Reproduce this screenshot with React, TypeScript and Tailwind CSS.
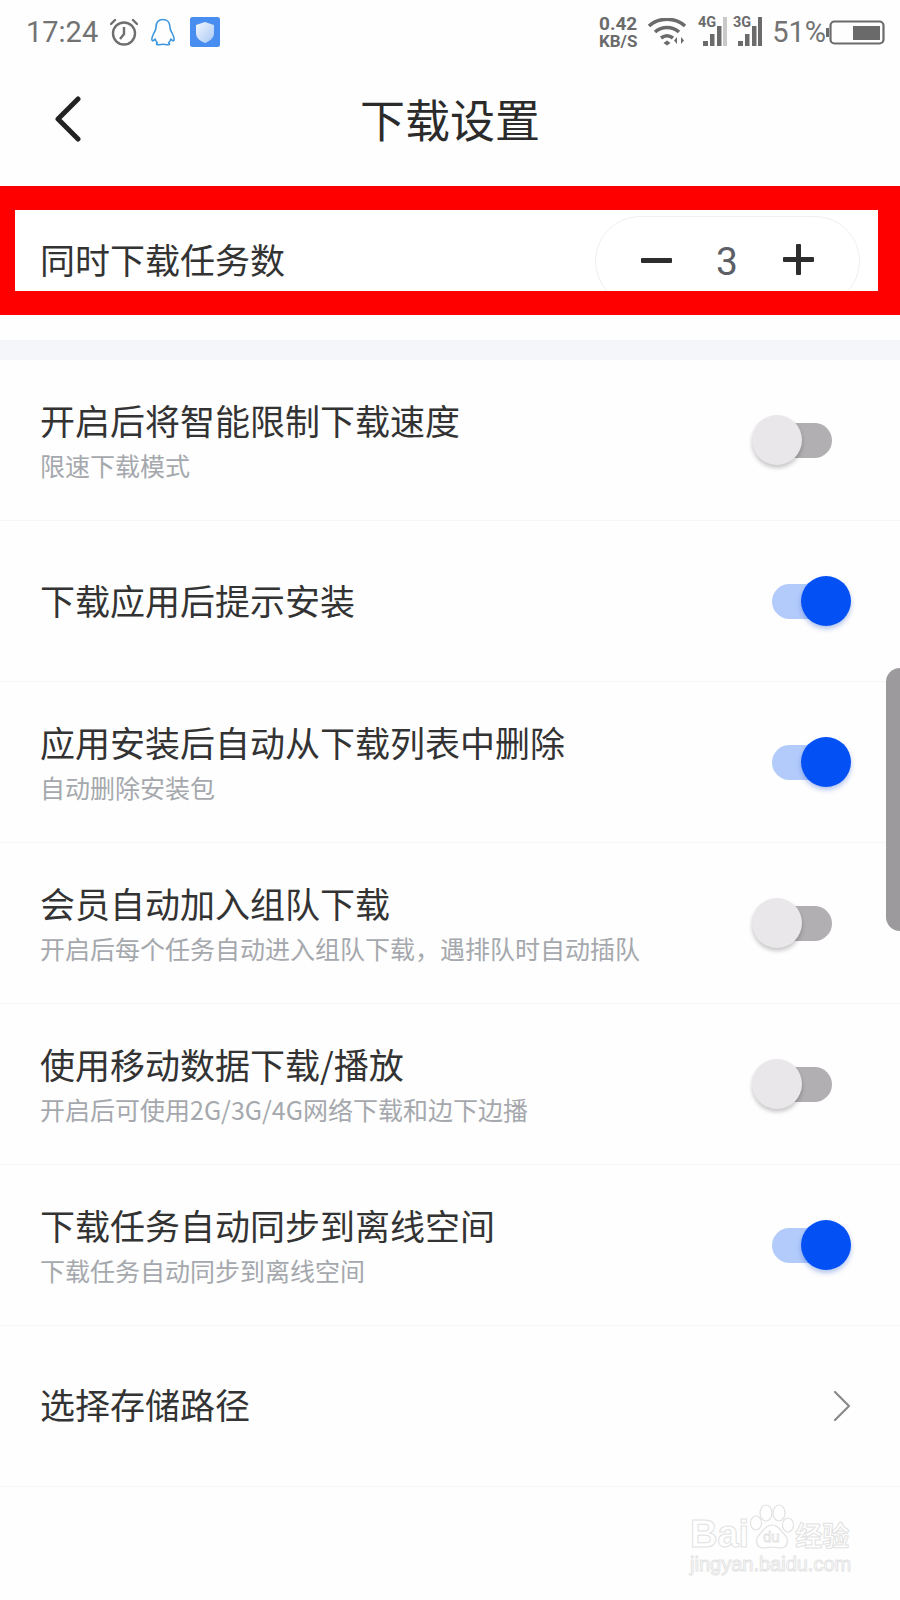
import React from 'react';

const cjk = { fontFamily: '"Noto Sans CJK SC", "Noto Sans", sans-serif' };

type Setting = {
  title: string;
  sub?: string;
  on?: boolean;
};

const settings: Setting[] = [
  { title: '开启后将智能限制下载速度', sub: '限速下载模式', on: false },
  { title: '下载应用后提示安装', on: true },
  { title: '应用安装后自动从下载列表中删除', sub: '自动删除安装包', on: true },
  { title: '会员自动加入组队下载', sub: '开启后每个任务自动进入组队下载，遇排队时自动插队', on: false },
  { title: '使用移动数据下载/播放', sub: '开启后可使用2G/3G/4G网络下载和边下边播', on: false },
  { title: '下载任务自动同步到离线空间', sub: '下载任务自动同步到离线空间', on: true },
];

const Toggle = ({ on }: { on?: boolean }) => (
  <div className="relative h-[50px] w-[99px] shrink-0">
    <div className={`absolute left-[20px] top-[8px] h-[35px] w-[60px] rounded-full ${on ? 'bg-[#b3cbfb]' : 'bg-[#b1afb1]'}`} />
    <div
      className={
        on
          ? 'absolute right-0 top-0 h-[50px] w-[50px] rounded-full bg-[#0350f5] shadow-[0_3px_5px_rgba(3,60,200,0.3)]'
          : 'absolute left-0 top-0 h-[50px] w-[50px] rounded-full bg-[#e9e7e9] shadow-[0_3px_4px_rgba(0,0,0,0.22)]'
      }
    />
  </div>
);

const Signal = ({ label, lastBar }: { label: string; lastBar: string }) => (
  <svg width="29" height="36" viewBox="0 -6 29 36" className="-mt-[6px] shrink-0">
    <text x="0" y="10" fontFamily="Roboto, sans-serif" fontWeight="700" fontSize="14.500" fill="#6b6b6b">{label}</text>
    <rect x="5" y="24" width="5" height="5" fill="#6b6b6b" />
    <rect x="12" y="17" width="4.500" height="12" fill="#6b6b6b" />
    <rect x="19" y="9" width="4.500" height="20" fill="#6b6b6b" />
    <rect x="25" y="0" width="4" height="29" fill={lastBar} />
  </svg>
);

const StatusBar = () => (
  <div className="flex h-[64px] items-center justify-between pl-[26px] pr-[15px]">
    <div className="flex items-center">
      <span className="text-[29px] leading-none text-[#737373]" style={{ fontFamily: 'Roboto, sans-serif' }}>17:24</span>
      <svg width="28" height="28" viewBox="0 0 28 28" className="ml-[12px]" fill="none" stroke="#6f6f6f" strokeWidth="2.400">
        <circle cx="14" cy="15.500" r="11" />
        <path d="M14 9v7l-4 5" />
        <path d="M1 6l4-4M27 6l-4-4" strokeLinecap="round" />
      </svg>
      <svg width="26" height="28" viewBox="0 0 26 28" className="ml-[12px]" fill="none" stroke="#3b96df" strokeWidth="1.600" strokeLinejoin="round">
        <path d="M13 1.500c-5 0-7 3.800-7 8 0 2-.6 2.800-2 5.500-1.800 3.400-2.500 6.500-1.800 7.500.7.800 2-.2 3-1.500.3 2 1.300 3 2.300 3.800-1.500.6-1.500 2 .5 2 2 .1 3.500-.6 5-.6s3 .7 5 .6c2 0 2-1.400.5-2 1-.8 2-1.800 2.300-3.800 1 1.300 2.300 2.300 3 1.500.7-1 0-4.100-1.800-7.500-1.400-2.700-2-3.500-2-5.500 0-4.200-2-8-7-8z" />
      </svg>
      <svg width="30" height="30" viewBox="0 0 30 30" className="ml-[14px]">
        <defs>
          <linearGradient id="shieldFill" x1="0" y1="0" x2="1" y2="1">
            <stop offset="0" stopColor="#f2f6fd" />
            <stop offset="1" stopColor="#a9c9f6" />
          </linearGradient>
        </defs>
        <rect width="30" height="30" rx="2.500" fill="#488df0" />
        <path d="M15 5l9 3v8c0 5-4 8-9 10-5-2-9-5-9-10V8z" fill="url(#shieldFill)" />
      </svg>
    </div>
    <div className="flex items-center">
      <div className="flex w-[40px] flex-col items-center font-bold text-[#6b6b6b]" style={{ fontFamily: 'Roboto, sans-serif' }}>
        <span className="text-[19px] leading-[18px]">0.42</span>
        <span className="text-[17px] leading-[16px]">KB/S</span>
      </div>
      <svg width="40" height="28" viewBox="0 0 40 28" className="ml-[10px]" fill="none" stroke="#6b6b6b" strokeWidth="3.600">
        <path d="M1 8c10-9 26-9 36 0" />
        <path d="M7 14c7-6 17-6 24 0" />
        <path d="M13 20c4-3 8-3 12 0" />
        <path d="M15.500 25l3.500-2.500 3.500 2.500-3.500 2.500z" fill="#6b6b6b" stroke="none" />
        <path d="M29 19v7l-3-3.500zM33 19v7l3-3.500z" fill="#6b6b6b" stroke="none" />
      </svg>
      <div className="ml-[10px]"><Signal label="4G" lastBar="#c9c9c9" /></div>
      <div className="ml-[6px]"><Signal label="3G" lastBar="#6b6b6b" /></div>
      <span className="ml-[10px] text-[29px] leading-none text-[#737373]" style={{ fontFamily: 'Roboto, sans-serif' }}>51%</span>
      <svg width="59" height="25" viewBox="0 0 59 25" className="shrink-0">
        <rect x="0" y="8" width="3" height="9" fill="#6b6b6b" />
        <rect x="4.500" y="1.500" width="53" height="22" rx="4" fill="none" stroke="#6b6b6b" strokeWidth="2.200" />
        <rect x="27" y="6" width="27" height="14" fill="#6a6a6a" />
      </svg>
    </div>
  </div>
);

const BaiduMark = () => (
  <div className="absolute left-[690px] top-[1503px] w-[170px] select-none" aria-hidden>
    <div className="flex items-end">
      <span className="text-[38px] font-bold leading-[38px] text-white [-webkit-text-stroke:1px_#e2e2e2]" style={{ fontFamily: '"Liberation Sans", sans-serif' }}>Bai</span>
      <svg width="48" height="50" viewBox="0 0 48 50" className="-ml-[2px]" fill="#fff" stroke="#e2e2e2" strokeWidth="1.200">
        <ellipse cx="9" cy="20" rx="5.500" ry="7" />
        <ellipse cx="19" cy="10" rx="6" ry="8" />
        <ellipse cx="32" cy="10" rx="6" ry="8" />
        <ellipse cx="41" cy="22" rx="5.500" ry="7" />
        <path d="M25 22c-6 0-8 5-13 10-4 4-3 13 4 13 4 0 6-1 9-1s6 1 9 1c7 0 8-9 4-13-5-5-7-10-13-10z" />
        <text x="16" y="39" fontFamily="Liberation Sans, sans-serif" fontSize="15" strokeWidth="0.800">du</text>
      </svg>
      <span className="text-[27px] font-bold leading-[36px] text-white [-webkit-text-stroke:1px_#e2e2e2]" style={cjk}>经验</span>
    </div>
    <div className="mt-[1px] text-[20px] leading-[20px] text-white [-webkit-text-stroke:1px_#e4e4e4]" style={{ fontFamily: '"Liberation Sans", sans-serif' }}>jingyan.baidu.com</div>
  </div>
);

const App = () => {
  return (
    <div className="relative h-[1600px] w-[900px] overflow-hidden bg-[#fefefe]" style={cjk}>
      <StatusBar />

      <div className="relative flex h-[122px] items-center justify-center pb-[14px]">
        <svg width="28" height="46" viewBox="0 0 28 46" className="absolute left-[54px] top-[32px]" fill="none" stroke="#222" strokeWidth="5" strokeLinecap="round" strokeLinejoin="round">
          <path d="M24 3L4 23l20 20" />
        </svg>
        <h1 className="text-[45px] font-normal leading-none text-[#2b2b2b]">下载设置</h1>
      </div>

      <div className="border-y-[24px] border-l-[15px] border-r-[22px] border-[#fe0000]">
        <div className="flex h-[81px] items-start justify-between overflow-hidden bg-white pl-[25px] pr-[18px]">
          <span className="mt-[26px] text-[35px] leading-[46px] text-[#333]">同时下载任务数</span>
          <div className="mt-[6px] flex h-[90px] w-[265px] shrink-0 items-start rounded-[45px] border border-[#efefef] pt-[26px]">
            <svg width="32" height="32" viewBox="0 0 32 32" className="ml-[45px] mt-[1px]" fill="#2d2d2d">
              <rect x="0" y="14" width="31" height="5" rx="1" />
            </svg>
            <span className="ml-[42px] w-[24px] text-center text-[39px] leading-[38px] text-[#5c5f66]" style={{ fontFamily: 'Roboto, sans-serif' }}>3</span>
            <svg width="32" height="32" viewBox="0 0 32 32" className="ml-[44px] mt-[1px]" fill="#2d2d2d">
              <rect x="0" y="13" width="31" height="5" rx="1" />
              <rect x="13" y="0" width="5" height="31" rx="1" />
            </svg>
          </div>
        </div>
      </div>

      <div className="mt-[25px] h-[20px] bg-[#f4f6fa]" />

      {settings.map((item) => (
        <div key={item.title} className="flex h-[161px] items-center justify-between border-b border-[#f6f6f6] pl-[40px] pr-[49px]">
          <div className={item.sub ? 'pt-[4px]' : 'pb-[2px]'}>
            <div className="text-[35px] leading-[46px] text-[#333]">{item.title}</div>
            {item.sub && <div className="text-[25px] leading-[44px] text-[#a5a8ad]">{item.sub}</div>}
          </div>
          <Toggle on={item.on} />
        </div>
      ))}

      <div className="flex h-[161px] items-center justify-between border-b border-[#f6f6f6] pl-[40px] pr-[49px]">
        <div className="pb-[4px] text-[35px] leading-[46px] text-[#333]">选择存储路径</div>
        <svg width="18" height="32" viewBox="0 0 18 32" fill="none" stroke="#8a8a8a" strokeWidth="2.200" strokeLinecap="round" strokeLinejoin="round">
          <path d="M2 2l14 14L2 30" />
        </svg>
      </div>

      {/* floating side handle */}
      <div className="absolute right-0 top-[668px] h-[263px] w-[14px] rounded-l-[14px] bg-[#9c9a9c]" />
      <BaiduMark />
    </div>
  );
};

export default App;
